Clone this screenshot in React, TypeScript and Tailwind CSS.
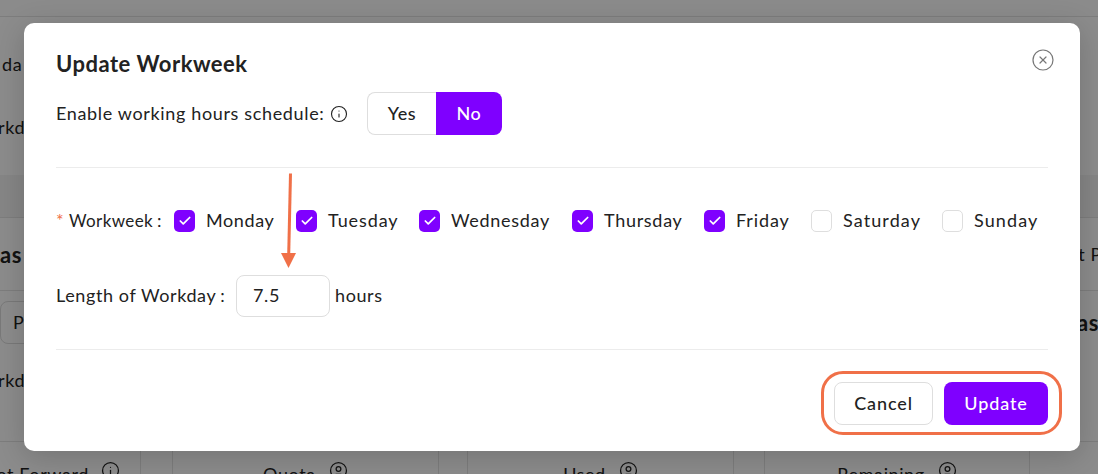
import { Info, CircleX, Check, CircleUser } from "lucide-react";

const days = [
  { n: "Monday", c: true, w: "w-[68px] tracking-[0.6px]" },
  { n: "Tuesday", c: true, w: "w-[69px] tracking-[0.9px]" },
  { n: "Wednesday", c: true, w: "w-[99px] tracking-[0.7px]" },
  { n: "Thursday", c: true, w: "w-[78px] tracking-[0.7px]" },
  { n: "Friday", c: true, w: "w-[53px] tracking-[0.9px]" },
  { n: "Saturday", c: false, w: "w-[77px] tracking-[1.1px]" },
  { n: "Sunday", c: false, w: "w-[63px] tracking-[1.1px]" },
];

function Background() {
  return (
    <div className="flex h-[474px] w-[1098px] flex-col overflow-hidden bg-white text-[18px] text-[#222]">
      <div className="h-[17px] shrink-0 border-b border-[#e4e4e4] bg-[#fdfdfd]" />
      <div className="flex h-[158px] shrink-0 flex-col gap-[41px] pt-[36px]">
        <div className="h-[22px] pl-[2px] leading-[22px]">da</div>
        <div className="-ml-[2px] h-[22px] leading-[22px]">rkd</div>
      </div>
      <div className="h-[43px] shrink-0 border-b border-[#e4e4e4] bg-[#f5f5f5]" />
      <div className="flex h-[73px] shrink-0 items-center justify-between border-b border-[#e4e4e4]">
        <span className="text-[22px] font-bold">as</span>
        <span className="-mr-[4px]">t P</span>
      </div>
      <div className="flex h-[151px] shrink-0 flex-col border-b border-[#e4e4e4]">
        <div className="flex items-center justify-between pt-[10px]">
          <div className="flex h-[43px] w-[60px] items-center rounded-[8px] border border-[#ddd] pl-[12px]">P</div>
          <span className="-mr-[1px] text-[22px] font-bold">as</span>
        </div>
        <div className="-ml-[2px] pt-[25px] leading-[22px]">rkd</div>
      </div>
      <div className="grid h-[32px] shrink-0 grid-cols-[141px_32px_266px_29px_266px_31px_265px_68px]">
        <div className="flex justify-end gap-[12px] border-r border-[#e4e4e4] pr-[20px] pt-[21px] leading-[22px]">
          <span className="whitespace-nowrap">ot Forward</span>
          <Info size={19} strokeWidth={1.6} className="-mt-[2px] shrink-0" />
        </div>
        <div className="border-r border-[#e4e4e4]" />
        <div className="flex justify-center gap-[13px] border-r border-[#e4e4e4] pt-[21px] leading-[22px]">
          <span>Quota</span>
          <CircleUser size={19} strokeWidth={1.6} className="-mt-[2px] shrink-0" />
        </div>
        <div className="border-r border-[#e4e4e4]" />
        <div className="flex justify-center gap-[13px] border-r border-[#e4e4e4] pt-[21px] leading-[22px]">
          <span>Used</span>
          <CircleUser size={19} strokeWidth={1.6} className="-mt-[2px] shrink-0" />
        </div>
        <div className="border-r border-[#e4e4e4]" />
        <div className="flex justify-center gap-[13px] border-r border-[#e4e4e4] pt-[21px] leading-[22px]">
          <span>Remaining</span>
          <CircleUser size={19} strokeWidth={1.6} className="-mt-[2px] shrink-0" />
        </div>
        <div />
      </div>
    </div>
  );
}

export default function App() {
  return (
    <div className="relative h-[474px] w-[1098px] overflow-hidden font-['Lato',sans-serif] tracking-[0.6px]">
      <Background />
      <div className="absolute inset-0 bg-black/45" />

      <div className="absolute left-[24px] top-[23px] h-[428px] w-[1056px] rounded-[10px] bg-white px-[32px] text-[18px] text-[#222] shadow-[0_6px_30px_rgba(0,0,0,0.18)]">
        <div className="whitespace-nowrap pt-[27px] text-[22px] font-bold leading-[28px] tracking-[0.5px]">Update Workweek</div>

        <div className="mt-[14px] flex h-[43px] items-center">
          <span className="w-[269px] whitespace-nowrap tracking-[0.65px]">Enable working hours schedule:</span>
          <Info size={18} strokeWidth={1.5} className="ml-[5px]" />
          <div className="ml-[19px] flex h-[43px] w-[135px] font-medium">
            <div className="flex w-[69px] items-center justify-center rounded-l-[8px] border border-r-0 border-[#dedede]">Yes</div>
            <div className="flex w-[66px] items-center justify-center rounded-r-[8px] bg-[#7f00ff] text-white">No</div>
          </div>
        </div>

        <div className="mt-[32px] h-px w-[992px] bg-[#ececec]" />

        <div className="mt-[42px] flex h-[22px] items-center pb-[1px]">
          <span className="w-[13px] text-[#f07048]">*</span>
          <span className="w-[88px] text-[17px] tracking-[0.4px]">Workweek</span>
          <span className="w-[17px]">:</span>
          <div className="flex gap-[22px]">
            {days.map((d) => (
              <div key={d.n} className="flex items-center gap-[11px]">
                {d.c ? (
                  <div className="flex h-[22px] w-[21px] items-center justify-center rounded-[5px] bg-[#7f00ff]">
                    <Check size={14} strokeWidth={3} className="text-white" />
                  </div>
                ) : (
                  <div className="h-[22px] w-[21px] rounded-[5px] border border-[#dedede]" />
                )}
                <span className={`${d.w} whitespace-nowrap`}>{d.n}</span>
              </div>
            ))}
          </div>
        </div>

        <div className="mt-[43px] flex h-[42px] items-center">
          <span className="w-[170px] whitespace-nowrap pb-[2px]">Length of Workday<span className="ml-[4px]">:</span></span>
          <div className="ml-[10px] flex h-[42px] w-[94px] items-center rounded-[8px] border border-[#dedede] pb-[2px] pl-[16px]">7.5</div>
          <span className="ml-[5px] pb-[2px]">hours</span>
        </div>

        <div className="mt-[32px] h-px w-[992px] bg-[#ececec]" />

        <div className="mt-[32px] flex w-[992px] justify-end gap-[11px] font-medium tracking-[0.9px]">
          <div className="flex h-[43px] w-[99px] items-center justify-center rounded-[8px] border border-[#dedede]">Cancel</div>
          <div className="flex h-[43px] w-[104px] items-center justify-center rounded-[8px] bg-[#7f00ff] text-white">Update</div>
        </div>

        <CircleX size={24} strokeWidth={1.2} className="absolute left-[1007px] top-[25px] text-[#777]" />
        <div className="absolute left-[797px] top-[348px] h-[64px] w-[241px] rounded-[22px] border-[3px] border-[#f07048]" />
      </div>

      <svg className="absolute left-[275px] top-[168px]" width="30" height="104" viewBox="0 0 30 104">
        <path d="M15.5 5.5 L13.7 87" stroke="#f07048" strokeWidth="3" fill="none" />
        <path d="M6 85 H21 L13.5 100 Z" fill="#f07048" />
      </svg>
    </div>
  );
}
